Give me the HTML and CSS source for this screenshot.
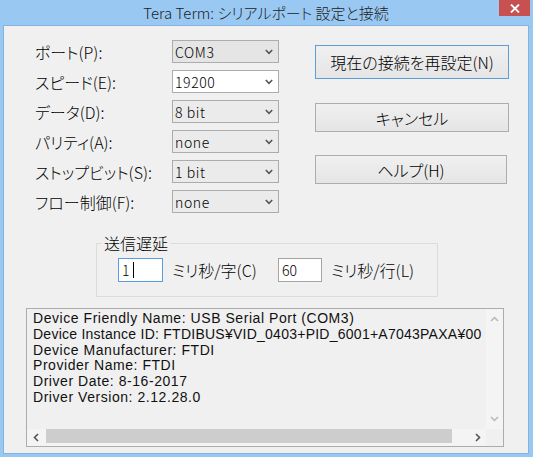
FILE: index.html
```html
<!DOCTYPE html>
<html lang="ja">
<head>
<meta charset="utf-8">
<title>Tera Term: シリアルポート 設定と接続</title>
<link rel="stylesheet" href="styles.css">
</head>
<body>
<div class="window">
  <div class="titlebar">
    <span class="spacer"></span>
    <span class="title">Tera Term: シリアルポート 設定と接続</span>
    <span class="close-wrap"><span class="close"><svg width="10" height="9" viewBox="0 0 10 9"><path d="M1 0.5 L9 8.5 M9 0.5 L1 8.5" stroke="#fff" stroke-width="1.8" fill="none"/></svg></span></span>
  </div>
  <div class="client">
    <div class="top">
      <div class="form">
        <span class="label">ポート(P):</span>
        <div class="select sel-active"><span>COM3</span><svg class="chev" width="8" height="6" viewBox="0 0 8 6"><path d="M0.8 1 L4 4.3 L7.2 1" stroke="#555" stroke-width="1.6" fill="none"/></svg></div>
        <span class="label">スピード(E):</span>
        <div class="select sel-edit"><span>19200</span><svg class="chev" width="8" height="6" viewBox="0 0 8 6"><path d="M0.8 1 L4 4.3 L7.2 1" stroke="#555" stroke-width="1.6" fill="none"/></svg></div>
        <span class="label">データ(D):</span>
        <div class="select"><span>8 bit</span><svg class="chev" width="8" height="6" viewBox="0 0 8 6"><path d="M0.8 1 L4 4.3 L7.2 1" stroke="#555" stroke-width="1.6" fill="none"/></svg></div>
        <span class="label">パリティ(A):</span>
        <div class="select"><span>none</span><svg class="chev" width="8" height="6" viewBox="0 0 8 6"><path d="M0.8 1 L4 4.3 L7.2 1" stroke="#555" stroke-width="1.6" fill="none"/></svg></div>
        <span class="label">ストップビット(S):</span>
        <div class="select"><span>1 bit</span><svg class="chev" width="8" height="6" viewBox="0 0 8 6"><path d="M0.8 1 L4 4.3 L7.2 1" stroke="#555" stroke-width="1.6" fill="none"/></svg></div>
        <span class="label">フロー制御(F):</span>
        <div class="select"><span>none</span><svg class="chev" width="8" height="6" viewBox="0 0 8 6"><path d="M0.8 1 L4 4.3 L7.2 1" stroke="#555" stroke-width="1.6" fill="none"/></svg></div>
      </div>
      <div class="buttons">
        <div class="btn btn-default">現在の接続を再設定(N)</div>
        <div class="btn btn-cancel">キャンセル</div>
        <div class="btn btn-help">ヘルプ(H)</div>
      </div>
    </div>
    <fieldset class="delay">
      <legend>送信遅延</legend>
      <div class="delay-row">
        <div class="input input-focus"><span>1</span><span class="caret"></span></div>
        <span class="unit">ミリ秒/字(C)</span>
        <div class="input"><span>60</span></div>
        <span class="unit">ミリ秒/行(L)</span>
      </div>
    </fieldset>
    <div class="info">
      <div class="info-text">
        <div class="line">Device Friendly Name: USB Serial Port (COM3)</div>
        <div class="line line-id">Device Instance ID: FTDIBUS¥VID_0403+PID_6001+A7043PAXA¥00</div>
        <div class="line">Device Manufacturer: FTDI</div>
        <div class="line">Provider Name: FTDI</div>
        <div class="line">Driver Date: 8-16-2017</div>
        <div class="line">Driver Version: 2.12.28.0</div>
      </div>
      <div class="vscroll">
        <svg width="9" height="6" viewBox="0 0 9 6"><path d="M1 5 L4.5 1.5 L8 5" stroke="#b8b8b8" stroke-width="1.5" fill="none"/></svg>
        <svg width="9" height="6" viewBox="0 0 9 6"><path d="M1 1 L4.5 4.5 L8 1" stroke="#b8b8b8" stroke-width="1.5" fill="none"/></svg>
      </div>
      <div class="hscroll">
        <span class="harrow"><svg width="6" height="9" viewBox="0 0 6 9"><path d="M5 1 L1.5 4.5 L5 8" stroke="#555" stroke-width="1.6" fill="none"/></svg></span>
        <span class="htrack"><span class="thumb"></span></span>
        <span class="harrow"><svg width="6" height="9" viewBox="0 0 6 9"><path d="M1 1 L4.5 4.5 L1 8" stroke="#555" stroke-width="1.6" fill="none"/></svg></span>
      </div>
      <div class="corner"></div>
    </div>
  </div>
</div>
</body>
</html>
```
FILE: styles.css
```css
* { box-sizing: border-box; }
html, body { margin: 0; padding: 0; }
body {
  width: 533px;
  height: 457px;
  overflow: hidden;
  font-family: "Noto Sans CJK JP", "Liberation Sans", sans-serif;
  font-weight: 300;
  font-feature-settings: "palt";
  color: #000;
}
.window {
  width: 533px;
  height: 457px;
  background: #99c9f3;
  padding: 0 4px 3px 3px;
  display: flex;
  flex-direction: column;
}
.titlebar {
  height: 25px;
  flex: none;
  display: grid;
  grid-template-columns: 1fr auto 1fr;
}
.title {
  font-size: 15px;
  line-height: 25px;
  color: #222;
  white-space: nowrap;
}
.close-wrap { display: flex; justify-content: flex-end; }
.close {
  width: 31px;
  height: 16px;
  margin-right: -1px;
  background: #c75050;
  display: flex;
  align-items: center;
  justify-content: center;
}
.client {
  flex: 1;
  background: #f0f0f0;
  border: 1px solid #83b3e0;
  padding-top: 14px;
}
.top { display: flex; align-items: flex-start; }
.form {
  display: grid;
  grid-template-columns: 137px 107px;
  grid-auto-rows: 23px;
  row-gap: 7px;
  margin-left: 31px;
  align-items: center;
}
.label { font-size: 16px; line-height: 20px; white-space: nowrap; }
.select {
  height: 23px;
  border: 1px solid #acacac;
  background: #ebebeb;
  display: flex;
  align-items: center;
  justify-content: space-between;
  padding: 0 5px 0 2px;
  font-size: 14px;
  line-height: 20px;
  letter-spacing: 0.6px;
}
.sel-active { background: #e5e5e5; }
.sel-edit { background: #fff; }
.buttons {
  display: flex;
  flex-direction: column;
  margin-left: 36px;
  margin-top: 5px;
  width: 194px;
}
.btn {
  height: 29px;
  border: 1px solid #adadad;
  background: linear-gradient(#f0f0f0, #e5e5e5);
  display: flex;
  align-items: center;
  justify-content: center;
  font-size: 16px;
  white-space: nowrap;
}
.btn-default { height: 34px; border-color: #5b9ed8; margin-bottom: 24px; }
.btn-cancel { margin-bottom: 23px; }
.btn-help { width: 192px; }
.delay {
  margin: 21px 0 0 92px;
  width: 342px;
  border: 1px solid #dcdcdc;
  padding: 0 0 14px 0;
  min-width: 0;
}
.delay legend {
  font-size: 16px;
  line-height: 18px;
  padding: 0 2px;
  margin-left: 5px;
}
.delay-row {
  display: grid;
  grid-template-columns: 45px 115px 44px auto;
  align-items: center;
  margin: 6px 0 0 21px;
}
.input {
  height: 24px;
  border: 1px solid #a5a5a5;
  background: #fff;
  font-size: 14px;
  line-height: 20px;
  padding-left: 3px;
  display: flex;
  align-items: center;
}
.input-focus { border-color: #569de5; }
.caret {
  display: inline-block;
  width: 1px;
  height: 16px;
  background: #000;
  margin-left: 3px;
}
.unit { font-size: 16px; line-height: 20px; padding-left: 9px; white-space: nowrap; }
.info {
  margin: 11px 0 0 22px;
  width: 478px;
  height: 139px;
  border: 1px solid #acacac;
  display: grid;
  grid-template-columns: 1fr 17px;
  grid-template-rows: 1fr 17px;
}
.info-text {
  font-family: "Liberation Sans", "Noto Sans CJK JP", sans-serif;
  font-weight: 400;
  font-feature-settings: normal;
  font-size: 14px;
  letter-spacing: 0.55px;
  line-height: 15.8px;
  color: #111;
  overflow: hidden;
  padding: 2px 0 0 6px;
}
.line { white-space: nowrap; }
.line-id { letter-spacing: 0.25px; }
.vscroll {
  background: #f4f4f4;
  display: flex;
  flex-direction: column;
  justify-content: space-between;
  align-items: center;
  padding: 7px 0 7px 0;
}
.hscroll {
  background: #f4f4f4;
  display: flex;
  align-items: stretch;
}
.harrow {
  width: 17px;
  flex: none;
  display: flex;
  align-items: center;
  justify-content: center;
}
.htrack { flex: 1; padding: 0 0 2px 2px; }
.thumb {
  display: block;
  width: 406px;
  height: 14px;
  background: #cdcdcd;
}
.corner { background: #f0f0f0; }
```
